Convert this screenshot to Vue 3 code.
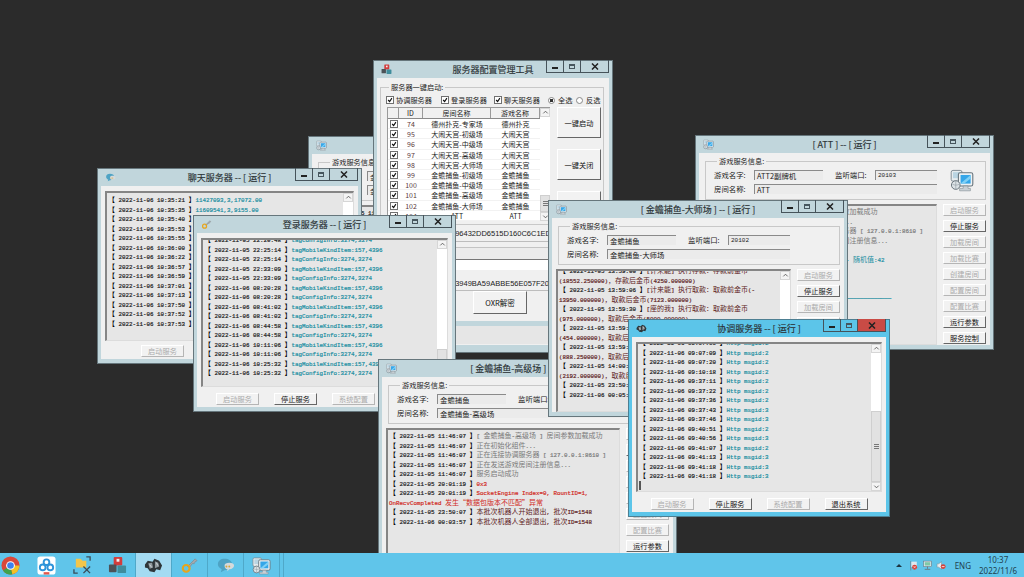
<template>
  <div class="screen">
    <!-- 图标定义 -->
    <svg class="defs" aria-hidden="true">
      <symbol id="i-monitor" viewBox="0 0 20 20">
        <rect x="1" y="2" width="9" height="9" rx="1.500" fill="#e6ecef" stroke="#7f8b92" stroke-width=".8" />
        <rect x="2.500" y="3.500" width="6" height="5" fill="#b9d4e2" />
        <rect x="7" y="4" width="12" height="11" rx="1.500" fill="#eef2f4" stroke="#66737b" stroke-width=".9" />
        <rect x="8.800" y="5.800" width="8.400" height="7.200" fill="#35a6e8" />
        <path d="M8.800 13l8.400-7.200v3L12 13z" fill="#7fd0f5" />
        <path d="M11 15h4v2h2v2H8v-2h3z" fill="#c9d0d5" stroke="#7f8b92" stroke-width=".5" />
        <circle cx="4.800" cy="14.200" r="3.600" fill="#dbe2e6" stroke="#66737b" stroke-width=".8" />
        <path d="M2 13.500c2 1 4 1 5.500 0M4.800 10.800v6.800" fill="none" stroke="#8d989f" stroke-width=".5" />
      </symbol>
      <symbol id="i-key" viewBox="0 0 20 20">
        <path d="M8 11l8-8 2 2-2 1-1 2-2 0-3 4z" fill="#a5a9ad" stroke="#7d8185" stroke-width=".6" />
        <circle cx="6.500" cy="13" r="3.600" fill="none" stroke="#e8a51c" stroke-width="2.200" />
      </symbol>
      <symbol id="i-fish" viewBox="0 0 20 20">
        <path d="M1 9l3-4 5 1 2-3 5 2 3 5-2 5-4-1-2 3-5-1-2-3-3-1z" fill="#2f3639" />
        <path d="M4.500 7.500l4-.5 1 5-3.500 1.500zM11.500 5.500l3.500 1.500 1 4-4.500 2z" fill="#8f989c" />
        <path d="M6 9l2 3M13 7l1.500 3" stroke="#e3e7e9" stroke-width=".8" />
      </symbol>
      <symbol id="i-chat" viewBox="0 0 20 20">
        <path d="M2 9c0-4 3-6 7-6s8 2 8 6-4 6-8 6l-4 2 1-3c-2-1-4-3-4-5z" fill="#4ea3c4" />
        <path d="M9 10c0-2 2-3 5-3s5 1 5 3-2 4-5 4l-2 2v-2c-2 0-3-2-3-4z" fill="#d5dadc" />
        <circle cx="11" cy="11" r="1" fill="#d6a63a" />
        <circle cx="14" cy="11" r="1" fill="#d6a63a" />
      </symbol>
      <symbol id="i-cubes" viewBox="0 0 20 20">
        <rect x="6" y="1" width="9" height="9" rx="1" fill="#d23c3c" />
        <rect x="9" y="3" width="3" height="3" fill="#f2f2f2" />
        <rect x="1" y="9" width="8" height="8" rx="1" fill="#4c5257" />
        <rect x="10" y="10" width="9" height="8" rx="1" fill="#3f8d9c" />
      </symbol>
      <symbol id="i-chrome" viewBox="0 0 20 20">
        <circle cx="10" cy="10" r="9.500" fill="#d9483b" />
        <path d="M10 10L2.200 15.200A9.500 9.500 0 0 0 12 19.300z" fill="#3fa34d" />
        <path d="M10 10h9.400A9.500 9.500 0 0 1 12 19.300z" fill="#f2c224" />
        <circle cx="10" cy="10" r="4.600" fill="#fff" />
        <circle cx="10" cy="10" r="3.500" fill="#3d81ee" />
      </symbol>
      <symbol id="i-tile" viewBox="0 0 20 20">
        <rect x="0.500" y="0.500" width="19" height="19" rx="3" fill="#fff" />
        <circle cx="10" cy="6.500" r="3" fill="none" stroke="#2e93d9" stroke-width="2" />
        <circle cx="6" cy="12" r="3" fill="none" stroke="#2e93d9" stroke-width="2" />
        <circle cx="14" cy="12" r="3" fill="none" stroke="#2e93d9" stroke-width="2" />
        <rect x="7" y="17" width="6" height="2.500" fill="#e4574b" />
      </symbol>
      <symbol id="i-tools" viewBox="0 0 20 20">
        <path d="M3 3h5l2 2h4v7H3z" fill="#f2c64a" />
        <path d="M14 1h4v4M1 14v4h4M18 18l-7-7M11 18l7-7" fill="none" stroke="#3a4c58" stroke-width="1.400" />
      </symbol>
      <symbol id="i-flag" viewBox="0 0 20 20">
        <path d="M5 2v17" stroke="#6a7378" stroke-width="1.200" />
        <path d="M6 3h10v10H6z" fill="#dfe8ee" />
        <circle cx="12" cy="13" r="4.500" fill="#d8423a" />
        <path d="M10 11l4 4M14 11l-4 4" stroke="#fff" />
      </symbol>
      <symbol id="i-net" viewBox="0 0 20 20">
        <rect x="3" y="2" width="14" height="10" fill="#dfe8ee" stroke="#6a7378" />
        <rect x="5" y="4" width="10" height="6" fill="#7fc8a6" />
        <path d="M10 12v4M5 17h10" stroke="#6a7378" stroke-width="1.500" />
      </symbol>
      <symbol id="i-speaker" viewBox="0 0 20 20">
        <path d="M2 7h3l5-4v14l-5-4H2z" fill="#e6edf1" stroke="#6a7378" stroke-width=".7" />
        <circle cx="13" cy="12" r="4.500" fill="#d8423a" />
        <path d="M10.500 12h5" stroke="#fff" stroke-width="1.400" />
      </symbol>
    </svg>

    <div class="desktop">
      <!-- 桌面上的各个窗口，按层叠顺序排列 -->
      <section
        v-for="w in windows"
        :key="w.id"
        class="win"
        :class="[`win-${w.id}`, { active: w.active }]"
        :style="{ left: `${w.x}px`, top: `${w.y}px`, width: `${w.w}px`, height: `${w.h}px` }"
      >
        <header class="titlebar">
          <svg class="title-icon"><use :href="`#i-${w.icon}`" /></svg>
          <span class="title">{{ w.title }}</span>
          <div class="caption">
            <span class="cap cap-min"><i></i></span>
            <span class="cap cap-max"><i></i></span>
            <span class="cap cap-close">
              <svg viewBox="0 0 8 7"><path d="M1 .5l6 6M7 .5l-6 6" /></svg>
            </span>
          </div>
        </header>

        <!-- 配置管理工具 -->
        <div v-if="w.kind === 'tool'" class="client tool">
          <fieldset class="group tool-group">
            <legend>服务器一键启动:</legend>
            <div class="pick-row">
              <label v-for="s in servers" :key="s" class="pick"><span class="check"><svg viewBox="0 0 8 8"><path d="M1.500 4l2 2 3-4.500" /></svg></span>{{ s }}</label>
              <label class="pick"><span class="radio on"></span>全选</label>
              <label class="pick"><span class="radio"></span>反选</label>
            </div>
            <div class="tool-main">
              <div class="grid-box">
                <div class="grid-view">
                  <div class="grid-head">
                    <span></span><span>ID</span><span>房间名称</span><span>游戏名称</span>
                  </div>
                  <div v-for="r in rooms" :key="r.id" class="grid-row">
                    <span><span class="check"><svg viewBox="0 0 8 8"><path d="M1.500 4l2 2 3-4.500" /></svg></span></span>
                    <span class="room-id">{{ r.id }}</span>
                    <span>{{ r.room }}</span>
                    <span>{{ r.game }}</span>
                  </div>
                </div>
                <div class="scroll">
                  <span class="arrow"><svg viewBox="0 0 8 8"><path d="M1.500 5l2.500-2.500L6.500 5" /></svg></span>
                  <span class="track" :style="{ flexBasis: '78px' }"></span>
                  <span class="thumb"><b></b><b></b><b></b></span>
                  <span class="arrow"><svg viewBox="0 0 8 8"><path d="M1.500 3l2.500 2.500L6.500 3" /></svg></span>
                </div>
              </div>
              <div class="big-btns">
                <button class="btn big">一键启动</button>
                <button class="btn big">一键关闭</button>
                <button class="btn big">一键重启</button>
              </div>
            </div>
          </fieldset>
          <div class="hex">3A7E10C4B96D2F5896432DD6515D160C6C1ED07B42</div>
          <div class="blank"></div>
          <div class="white-input"></div>
          <div class="hex hex-second">3A7E10C4B96D2F583949BA59ABBE56E057F20FB18C</div>
          <div class="decode-row"><button class="btn decode">OXR解密</button></div>
          <div class="tool-foot"></div>
        </div>

        <!-- 房间服务器窗口 -->
        <div v-else class="client" :class="w.kind">
          <fieldset v-if="w.kind === 'room'" class="group info">
            <legend>游戏服务信息:</legend>
            <div class="info-grid">
              <span>游戏名字:</span>
              <span class="input">{{ w.game }}</span>
              <span class="port-label">监听端口:</span>
              <span class="input lat-input">{{ w.port }}</span>
              <span>房间名称:</span>
              <span class="input wide">{{ w.room }}</span>
            </div>
            <svg v-if="w.bigIcon" class="big-icon"><use href="#i-monitor" /></svg>
          </fieldset>

          <div class="body">
            <div class="log">
              <div class="log-rows" :style="{ marginTop: `${w.logTop}px` }">
                <div v-for="(row, i) in w.logs" :key="i" class="log-row">
                  <span
                    v-for="(p, j) in row"
                    :key="j"
                    :class="[p.cjk ? 'cjk' : 'lat', p.tone]"
                  >{{ p.text }}</span>
                </div>
                <i v-if="w.caret" class="caret"></i>
              </div>
              <div v-if="w.thumbTop !== undefined" class="scroll">
                <span class="arrow"><svg viewBox="0 0 8 8"><path d="M1.500 5l2.500-2.500L6.500 5" /></svg></span>
                <span class="track" :style="{ flexBasis: `${w.thumbTop}px` }"></span>
                <span class="thumb fill"><b></b><b></b><b></b></span>
                <span class="arrow"><svg viewBox="0 0 8 8"><path d="M1.500 3l2.500 2.500L6.500 3" /></svg></span>
              </div>
            </div>
            <div v-if="w.kind === 'room'" class="side-btns">
              <button v-for="b in roomButtons" :key="b.label" class="btn" :class="{ off: b.off }">{{ b.label }}</button>
            </div>
          </div>

          <div v-if="w.kind === 'service'" class="bar">
            <button v-for="b in w.buttons" :key="b.label" class="btn" :class="{ off: b.off }">{{ b.label }}</button>
          </div>
        </div>
      </section>
    </div>

    <!-- 任务栏 -->
    <footer class="taskbar">
      <div v-for="t in taskItems" :key="t.icon" class="task" :class="{ current: t.current }">
        <svg><use :href="`#i-${t.icon}`" /></svg>
      </div>
      <div class="task-end"></div>
      <div class="tray">
        <span class="tray-up"></span>
        <svg><use href="#i-flag" /></svg>
        <svg><use href="#i-net" /></svg>
        <svg><use href="#i-speaker" /></svg>
        <span class="lang">ENG</span>
        <div class="clock"><span>10:37</span><span>2022/11/6</span></div>
      </div>
    </footer>
  </div>
</template>

<script setup>
const CJK = /([\u2E80-\u9FFF\uFF00-\uFFEF\u3000-\u303F\u201C\u201D]+)/

// 拆分中文和西文，两者字号不同
const parts = (text, tone) =>
  text
    .split(CJK)
    .map((t, i) => ({ text: t, cjk: i % 2 === 1, tone }))
    .filter((p) => p.text)

const row = (date, msg = '', tone = 'teal') => [...parts(`【 ${date} 】`, 'stamp'), ...parts(msg, tone)]
const cont = (msg, tone) => parts(msg, tone)

const servers = ['协调服务器', '登录服务器', '聊天服务器']

const gameRoom = (id, prefix, name) =>
  ['初级场', '中级场', '高级场', '大师场'].map((s, i) => ({ id: id[i], room: `${prefix}-${s}`, game: name }))

const rooms = [
  { id: 74, room: '德州扑克-专家场', game: '德州扑克' },
  ...gameRoom([95, 96, 97, 98], '大闹天宫', '大闹天宫'),
  ...gameRoom([99, 100, 101, 102], '金蟾捕鱼', '金蟾捕鱼'),
  { id: 104, room: 'ATT', game: 'ATT' }
]

const roomButtons = [
  { label: '启动服务', off: true },
  { label: '停止服务' },
  { label: '加载房间', off: true },
  { label: '加载比赛', off: true },
  { label: '创建房间', off: true },
  { label: '配置房间', off: true },
  { label: '配置比赛', off: true },
  { label: '运行参数' },
  { label: '服务控制' }
]

const serviceButtons = [
  { label: '启动服务', off: true },
  { label: '停止服务' },
  { label: '系统配置', off: true },
  { label: '退出系统' }
]

const d5 = '2022-11-05'
const d6 = '2022-11-06'

const chatLogs = [
  row(`${d6} 10:35:21`, '11427093,3,17072.00'),
  row(`${d6} 10:35:35`, '11609541,3,9155.00'),
  ...['10:35:40', '10:35:53', '10:35:55', '10:36:00', '10:36:22', '10:36:57', '10:36:59', '10:37:01', '10:37:13', '10:37:50', '10:37:52', '10:37:53'].map((t) => row(`${d6} ${t}`))
]

const mobile = 'tagMobileKindItem:157,4396'
const config = 'tagConfigInfo:3274,3274'
const loginLogs = [
  row(`${d5} 22:20:48`, config),
  row(`${d5} 22:25:14`, mobile),
  row(`${d5} 22:25:14`, config),
  row(`${d5} 22:33:09`, mobile),
  row(`${d5} 22:33:09`, config),
  row(`${d6} 08:20:28`, mobile),
  row(`${d6} 08:20:28`, config),
  row(`${d6} 08:41:02`, mobile),
  row(`${d6} 08:41:02`, config),
  row(`${d6} 08:44:58`, mobile),
  row(`${d6} 08:44:58`, config),
  row(`${d6} 10:11:06`, mobile),
  row(`${d6} 10:11:06`, config),
  row(`${d6} 10:25:32`, mobile),
  row(`${d6} 10:25:32`, config)
]

const coordLogs = [
  ['09:07:00', 2], ['09:07:09', 2], ['09:07:20', 2], ['09:10:18', 2], ['09:37:11', 2],
  ['09:37:22', 2], ['09:37:36', 2], ['09:37:43', 3], ['09:37:46', 3], ['09:40:51', 2],
  ['09:40:56', 3], ['09:41:07', 2], ['09:41:13', 3], ['09:41:18', 3], ['09:41:18', 3]
].map(([t, id]) => row(`${d6} ${t}`, `Http msgid:${id}`))

const bootLogs = (name, date = d5) => [
  row(`${date} 11:46:07`, `[ ${name} ] 房间参数加载成功`, 'gray'),
  row(`${date} 11:46:07`, '正在初始化组件...', 'gray'),
  row(`${date} 11:46:07`, '正在连接协调服务器 [ 127.0.0.1:8610 ]', 'gray'),
  row(`${date} 11:46:07`, '正在发送游戏房间注册信息...', 'gray'),
  row(`${date} 11:46:07`, '服务启动成功', 'gray')
]

const gaoLogs = [
  ...bootLogs('金蟾捕鱼-高级场'),
  row(`${d5} 20:01:19`, '0x3', 'red'),
  row(`${d5} 20:01:19`, 'SocketEngine Index=0, RountID=1,', 'red'),
  cont('OnRecvCompleted 发生“数据包版本不匹配”异常', 'red'),
  row(`${d5} 23:50:07`, '本批次机器人开始退出, 批次ID=1548', 'maroon'),
  row(`${d6} 00:03:57`, '本批次机器人全部退出, 批次ID=1548', 'maroon')
]

const attLogs = [
  ...bootLogs('ATT'),
  row(`${d5} 11:47:10`, '机器人配置完成 · 随机值:42', 'teal'),
  [], [], [],
  cont('—————————————————————————————————————————————————————', 'teal')
]

const masterLogs = [
  row(`${d5} 13:59:00`, '[计来能] 执行存款：存款前金币', 'maroon'),
  cont('(18552.250000)，存款后金币(4250.000000)', 'maroon'),
  row(`${d5} 13:59:06`, '[计来能] 执行取款：取款前金币(-', 'maroon'),
  cont('13950.000000)，取款后金币(7123.000000)', 'maroon'),
  row(`${d5} 13:59:30`, '[座的我] 执行取款：取款前金币', 'maroon'),
  cont('(975.000000)，取款后金币(5000.000000)', 'maroon'),
  row(`${d5} 13:59:40`, '[座的我] 执行取款：取款前金币', 'maroon'),
  cont('(454.000000)，取款后金币(1200.000000)', 'maroon'),
  row(`${d5} 13:59:52`, '[座的我] 执行取款：取款前金币', 'maroon'),
  cont('(888.250000)，取款后金币(1500.000000)', 'maroon'),
  row(`${d5} 14:00:11`, '[座的我] 执行取款：取款前金币', 'maroon'),
  cont('(2192.000000)，取款后金币(3000.000000)', 'maroon'),
  row(`${d5} 23:50:07`, '本批次机器人开始退出', 'maroon'),
  row(`${d6} 00:05:12`, '本批次机器人全部退出', 'maroon')
]

const windows = [
  { id: 'back', kind: 'room', icon: 'monitor', title: '[ 金蟾捕鱼-中级场 ] -- [ 运行 ]', x: 308, y: 136, w: 299, h: 215, game: '金蟾捕鱼', port: '20100', room: '金蟾捕鱼-中级场', logs: bootLogs('金蟾捕鱼-中级场'), logTop: 1 },
  { id: 'tool', kind: 'tool', icon: 'cubes', title: '服务器配置管理工具', x: 373, y: 60, w: 240, h: 293 },
  { id: 'att', kind: 'room', icon: 'monitor', bigIcon: true, title: '[ ATT ] -- [ 运行 ]', x: 695, y: 135, w: 299, h: 215, game: 'ATT2副牌机', port: '20103', room: 'ATT', logs: attLogs, logTop: 1 },
  { id: 'chat', kind: 'service', icon: 'chat', title: '聊天服务器 -- [ 运行 ]', x: 97, y: 168, w: 265, h: 196, logs: chatLogs, logTop: 2, thumbTop: 100, buttons: serviceButtons.slice(0, 1) },
  { id: 'login', kind: 'service', icon: 'key', title: '登录服务器 -- [ 运行 ]', x: 193, y: 215, w: 263, h: 197, logs: loginLogs, logTop: -5, thumbTop: 100, buttons: serviceButtons },
  { id: 'gao', kind: 'room', icon: 'monitor', title: '[ 金蟾捕鱼-高级场 ] -- [ 运行 ]', x: 378, y: 359, w: 299, h: 215, game: '金蟾捕鱼', port: '20101', room: '金蟾捕鱼-高级场', logs: gaoLogs, logTop: 1 },
  { id: 'master', kind: 'room', icon: 'monitor', title: '[ 金蟾捕鱼-大师场 ] -- [ 运行 ]', x: 548, y: 200, w: 300, h: 217, game: '金蟾捕鱼', port: '20102', room: '金蟾捕鱼-大师场', logs: masterLogs, logTop: -5, thumbTop: 60 },
  { id: 'coord', kind: 'service', icon: 'fish', active: true, title: '协调服务器 -- [ 运行 ]', x: 628, y: 319, w: 262, h: 198, logs: coordLogs, logTop: -6, thumbTop: 58, caret: true, buttons: serviceButtons }
]

const taskItems = [
  { icon: 'chrome' },
  { icon: 'tile' },
  { icon: 'tools' },
  { icon: 'cubes' },
  { icon: 'fish', current: true },
  { icon: 'key' },
  { icon: 'chat' },
  { icon: 'monitor' }
]
</script>

<style>
html, body {
  margin: 0;
  background: #2b2b2b;
  overflow: hidden;
}
</style>

<style scoped>
.defs {
  display: none;
}

.screen {
  width: 1024px;
  height: 577px;
  display: flex;
  flex-direction: column;
  background: #2b2b2b;
  font-family: "Noto Sans CJK SC", "Liberation Sans", sans-serif;
  font-size: 7px;
  color: #222;
  overflow: hidden;
}

.desktop {
  position: relative;
  flex: 1;
  overflow: hidden;
}

/* 窗口 */
.win {
  position: absolute;
  box-sizing: border-box;
  display: flex;
  flex-direction: column;
  background: #c1d6dc;
  border: 1px solid #66767c;
  padding: 0 3px 4px;
}

.win.active {
  background: #5cc5e9;
  border-color: #4d7f92;
}

.win-tool {
  padding-bottom: 7px;
}

.titlebar {
  flex: none;
  height: 17px;
  display: grid;
  grid-template-columns: 1fr auto 1fr;
  align-items: center;
}

.title-icon {
  width: 11px;
  height: 11px;
  margin-left: 4px;
}

.title {
  font-size: 9px;
  color: #2c3336;
  white-space: nowrap;
  -webkit-text-stroke: .15px #2c3336;
}

.caption {
  justify-self: end;
  align-self: start;
  display: flex;
  height: 13px;
  margin-top: -1px;
  border: 1px solid #46535a;
  border-top: none;
  box-sizing: border-box;
}

.cap {
  display: flex;
  align-items: center;
  justify-content: center;
  width: 16px;
  border-right: 1px solid #46535a;
}

.cap-min i {
  width: 6px;
  height: 2px;
  margin-top: 3px;
  background: #222;
}

.cap-max i {
  width: 6px;
  height: 5px;
  box-sizing: border-box;
  border: 1px solid #47565e;
  border-top-width: 2px;
}

.cap-close {
  width: 27px;
  border-right: none;
}

.cap-close svg {
  width: 8px;
  height: 7px;
}

.cap-close path {
  fill: none;
  stroke: #222;
  stroke-width: 1.500;
}

.active .cap-close {
  background: #c94b45;
}

.client {
  flex: 1;
  min-height: 0;
  display: flex;
  flex-direction: column;
  background: #f0f0f0;
  box-sizing: border-box;
}

.client.service {
  padding: 5px 4px 2px;
}

.client.room {
  padding: 4px 4px 0;
}

/* 分组框 */
.group {
  position: relative;
  margin: 0;
  min-width: 0;
  border: 1px solid #c8c8c8;
  box-sizing: border-box;
}

.group legend {
  padding: 0 2px;
  margin-left: 3px;
  font-size: 7.200px;
  line-height: 9px;
  color: #222;
}

.info {
  flex: none;
  height: 43px;
  margin: 0 0 0 2px;
  padding: 4px 0 0 8px;
}

.info-grid {
  display: grid;
  grid-template-columns: 40px 69px 52px 62px;
  grid-auto-rows: 10px;
  row-gap: 3.500px;
  align-items: center;
  line-height: 10px;
  font-size: 7.400px;
}

.port-label {
  padding-left: 12px;
  white-space: nowrap;
}

.input {
  height: 10px;
  padding-left: 2px;
  overflow: hidden;
  white-space: nowrap;
  border-top: 1px solid #8a8a8a;
  border-left: 1px solid #8a8a8a;
  background: #ebebeb;
  box-sizing: border-box;
  line-height: 9px;
}

.lat-input {
  font-family: "Liberation Mono", monospace;
  font-size: 6px;
}

.wide {
  grid-column: 2 / 5;
}

.big-icon {
  position: absolute;
  right: 11px;
  top: 2px;
  width: 24px;
  height: 24px;
}

.body {
  flex: 1;
  min-height: 0;
  display: flex;
  gap: 6px;
}

.room .body {
  margin-top: 4px;
}

/* 日志框 */
.log {
  flex: 1;
  min-width: 0;
  display: flex;
  overflow: hidden;
  background: #e6e6e6;
  border-top: 2px solid #858585;
  border-left: 2px solid #858585;
  border-right: 1px solid #dcdcdc;
  border-bottom: 1px solid #dcdcdc;
  box-sizing: border-box;
}

.log-rows {
  flex: 1;
  min-width: 0;
  padding-left: 1px;
  position: relative;
}

.log-row {
  height: 9.500px;
  line-height: 9.500px;
  white-space: pre;
}

.cjk {
  font-family: "Noto Sans CJK SC", sans-serif;
  font-size: 7px;
}

.lat {
  font-family: "Liberation Mono", monospace;
  font-size: 5.840px;
  -webkit-text-stroke: .2px currentColor;
}

.stamp { color: #222; }
.stamp.cjk { color: #000; }
.teal { color: #1b8ea2; }
.gray { color: #7a7a7a; }
.red { color: #d12b1f; }
.maroon { color: #5e2424; }

.caret {
  display: block;
  width: 2px;
  height: 9px;
  background: #555;
}

/* 滚动条 */
.scroll {
  flex: none;
  width: 10px;
  display: flex;
  flex-direction: column;
  background: #fff;
}

.arrow {
  flex: none;
  height: 9px;
  display: flex;
  align-items: center;
  justify-content: center;
  background: #f4f4f4;
  border: 1px solid #d6d6d6;
  box-sizing: border-box;
}

.arrow svg {
  width: 7px;
  height: 7px;
}

.arrow path {
  fill: none;
  stroke: #555;
  stroke-width: 1;
}

.track {
  flex: 0 0 auto;
  background: #fff;
}

.thumb {
  flex: 1;
  display: flex;
  flex-direction: column;
  align-items: center;
  justify-content: center;
  gap: 1px;
  background: #e2e2e2;
  border: 1px solid #cfcfcf;
  box-sizing: border-box;
}

.thumb b {
  width: 5px;
  height: 1px;
  background: #777;
}

/* 按钮 */
.btn {
  flex: none;
  padding: 0;
  margin: 0;
  height: 12px;
  width: 43px;
  font-family: inherit;
  font-size: 7.200px;
  line-height: 10px;
  color: #111;
  background: #f2f2f2;
  border: 1px solid #fff;
  border-right-color: #666;
  border-bottom-color: #666;
  box-sizing: border-box;
  border-radius: 0;
}

.btn.off {
  color: #aaa;
  border-right-color: #b5b5b5;
  border-bottom-color: #b5b5b5;
}

.side-btns {
  flex: none;
  display: flex;
  flex-direction: column;
  gap: 4px;
}

.bar {
  flex: none;
  display: flex;
  justify-content: center;
  gap: 15px;
  margin-top: 6px;
}

.win-chat .bar {
  justify-content: flex-start;
  padding-left: 36px;
  margin-top: 4px;
}

/* 配置工具 */
.client.tool {
  padding: 5px 5px 0 3px;
}

.tool-group {
  flex: none;
  height: 142px;
  padding: 3px 0 0 5px;
}

.pick-row {
  display: grid;
  grid-template-columns: 55px 53px 54px 28px auto;
  height: 10px;
  align-items: center;
}

.pick {
  display: flex;
  align-items: center;
  gap: 2px;
  white-space: nowrap;
  font-size: 7.200px;
}

.check {
  display: inline-flex;
  width: 8px;
  height: 8px;
  background: #fff;
  border: 1px solid #707070;
  box-sizing: border-box;
}

.check svg {
  width: 6px;
  height: 6px;
}

.check path {
  fill: none;
  stroke: #111;
  stroke-width: 1.500;
}

.radio {
  width: 7px;
  height: 7px;
  border-radius: 50%;
  background: #fff;
  border: 1px solid #888;
  box-sizing: border-box;
  margin-right: 1px;
}

.radio.on {
  background: radial-gradient(circle, #333 0 1.500px, #fff 1.800px);
}

.tool-main {
  display: flex;
  gap: 7px;
  margin-top: 2px;
  margin-left: 1px;
}

.grid-box {
  flex: none;
  width: 163px;
  height: 114px;
  display: flex;
  overflow: hidden;
  background: #fff;
  border-top: 1px solid #9a9a9a;
  border-left: 1px solid #9a9a9a;
  box-sizing: border-box;
}

.grid-view {
  flex: 1;
  min-width: 0;
}

.grid-head,
.grid-row {
  display: grid;
  grid-template-columns: 11px 24px 68px 49px;
  text-align: center;
  align-items: center;
}

.grid-head {
  height: 11px;
  line-height: 10px;
  background: #f1f1f1;
  border-bottom: 1px solid #8a8a8a;
  box-sizing: border-box;
}

.grid-head span {
  height: 10px;
  border-right: 1px solid #9a9a9a;
  box-sizing: border-box;
}

.grid-row {
  height: 10.200px;
  line-height: 10px;
  border-bottom: 1px solid #f2f2f2;
  box-sizing: border-box;
}

.grid-row > span:first-child {
  display: flex;
  justify-content: center;
}

.room-id {
  color: #5b3a3a;
}

.big-btns {
  display: flex;
  flex-direction: column;
  gap: 11px;
}

.btn.big {
  width: 44px;
  height: 31px;
}

.hex {
  flex: none;
  height: 14px;
  margin-top: 2px;
  line-height: 14px;
  padding-left: 3px;
  overflow: hidden;
  white-space: nowrap;
  font-family: "Liberation Sans", sans-serif;
  font-size: 7.500px;
  color: #222;
  border-bottom: 1px solid #bdbdbd;
}

.blank {
  flex: none;
  height: 11px;
  margin-top: 5px;
  background: #ececec;
  border-top: 1px solid #c4c4c4;
  border-bottom: 1px solid #777;
}

.white-input {
  flex: none;
  height: 10px;
  background: #fff;
}

.hex-second {
  margin-top: 8px;
  height: 12px;
  line-height: 12px;
}

.decode-row {
  flex: none;
  display: flex;
  justify-content: flex-start;
  padding: 0 0 0 93px;
}

.btn.decode {
  width: 54px;
  height: 23px;
  font-size: 7.500px;
}

.tool-foot {
  flex: none;
  height: 18px;
  margin: 7px -5px 0 -3px;
  background: #e6e6e6;
  border-top: 5px solid #c1d6dc;
}

/* 任务栏 */
.taskbar {
  flex: none;
  height: 24px;
  display: flex;
  align-items: stretch;
  background: #60c5ea;
  z-index: 1;
}

.task {
  width: 36px;
  display: flex;
  align-items: center;
  justify-content: center;
  box-sizing: border-box;
  border-right: 1px solid #4fa8c9;
}

.task:first-child {
  margin-left: -8px;
  border-right: none;
}

.task:nth-child(2),
.task:nth-child(3) {
  border-right: none;
}

.task.current {
  background: #a4dbf2;
}

.task svg {
  width: 19px;
  height: 19px;
}

.task-end {
  width: 3px;
  border-right: 1px solid #4fa8c9;
}

.tray {
  margin-left: auto;
  display: flex;
  align-items: center;
  padding-right: 6px;
}

.tray-up {
  width: 0;
  height: 0;
  border: 3px solid transparent;
  border-top: none;
  border-bottom: 3px solid #1c3440;
  margin-right: 6px;
}

.tray svg {
  width: 11px;
  height: 11px;
  margin-right: 3px;
}

.lang {
  margin-left: 5px;
  font-family: "Noto Sans", sans-serif;
  font-size: 8px;
  color: #22424f;
}

.clock {
  width: 40px;
  margin-left: 7px;
  display: flex;
  flex-direction: column;
  align-items: center;
  font-family: "Noto Sans", sans-serif;
  font-size: 8px;
  line-height: 11px;
  color: #22424f;
}
</style>
